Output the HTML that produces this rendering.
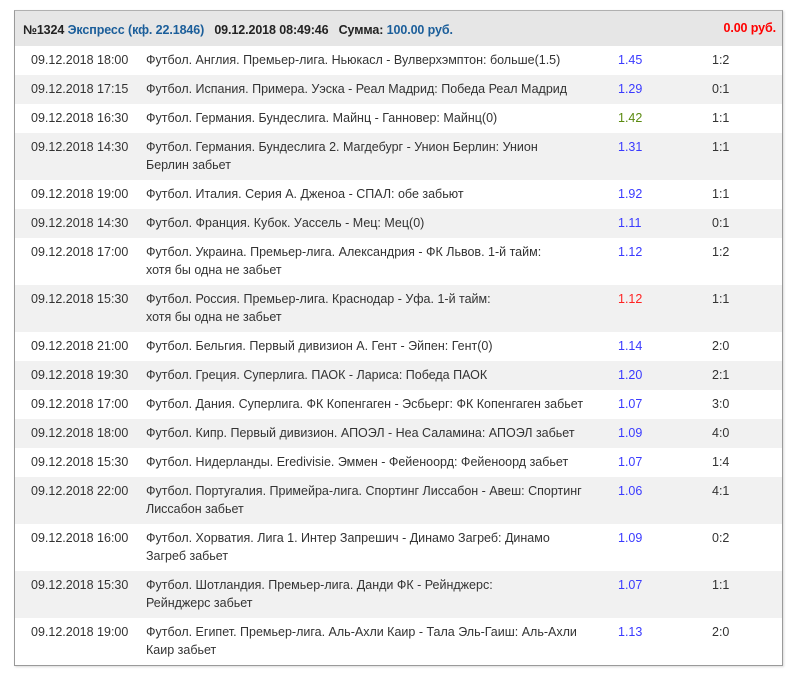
<!DOCTYPE html>
<html><head><meta charset="utf-8"><style>
body{margin:0;background:#fff;font-family:"Liberation Sans",sans-serif;}
.box{position:absolute;left:14px;top:10px;width:767px;border:1px solid #9a9a9a;border-top-color:#b0b0b0;box-shadow:1px 1px 2px rgba(0,0,0,.15);}
.hd{height:35px;background:#e6e6e6;position:relative;font-weight:bold;font-size:12.5px;color:#222;letter-spacing:-0.1px;}
.hd .l{position:absolute;left:8px;top:12px;white-space:nowrap;}
.hd .r{position:absolute;right:6px;top:10px;color:#f00;}
.bl{color:#1b5e9a;}
table{border-collapse:collapse;width:767px;table-layout:fixed;font-size:12.5px;color:#333;letter-spacing:0;}
td{padding:5px 0 6px 16px;line-height:18px;vertical-align:top;}
tr:nth-child(even){background:#f1f1f1;}
.c3{padding-left:18px;color:#3a3aff;}
.c4{padding-left:18px;}
</style></head><body>
<div class="box">
<div class="hd"><div class="l">№1324 <span class="bl">Экспресс (кф. 22.1846)</span> &nbsp; 09.12.2018 08:49:46 &nbsp; Сумма: <span class="bl">100.00 руб.</span></div><div class="r">0.00 руб.</div></div>
<table>
<colgroup><col style="width:115px"><col style="width:470px"><col style="width:94px"><col></colgroup>
<tr><td>09.12.2018 18:00</td><td>Футбол. Англия. Премьер-лига. Ньюкасл - Вулверхэмптон: больше(1.5)</td><td class="c3">1.45</td><td class="c4">1:2</td></tr>
<tr><td>09.12.2018 17:15</td><td>Футбол. Испания. Примера. Уэска - Реал Мадрид: Победа Реал Мадрид</td><td class="c3">1.29</td><td class="c4">0:1</td></tr>
<tr><td>09.12.2018 16:30</td><td>Футбол. Германия. Бундеслига. Майнц - Ганновер: Майнц(0)</td><td class="c3" style="color:#5a8a10">1.42</td><td class="c4">1:1</td></tr>
<tr><td>09.12.2018 14:30</td><td>Футбол. Германия. Бундеслига 2. Магдебург - Унион Берлин: Унион<br>Берлин забьет</td><td class="c3">1.31</td><td class="c4">1:1</td></tr>
<tr><td>09.12.2018 19:00</td><td>Футбол. Италия. Серия А. Дженоа - СПАЛ: обе забьют</td><td class="c3">1.92</td><td class="c4">1:1</td></tr>
<tr><td>09.12.2018 14:30</td><td>Футбол. Франция. Кубок. Уассель - Мец: Мец(0)</td><td class="c3">1.11</td><td class="c4">0:1</td></tr>
<tr><td>09.12.2018 17:00</td><td>Футбол. Украина. Премьер-лига. Александрия - ФК Львов. 1-й тайм:<br>хотя бы одна не забьет</td><td class="c3">1.12</td><td class="c4">1:2</td></tr>
<tr><td>09.12.2018 15:30</td><td>Футбол. Россия. Премьер-лига. Краснодар - Уфа. 1-й тайм:<br>хотя бы одна не забьет</td><td class="c3" style="color:#f22">1.12</td><td class="c4">1:1</td></tr>
<tr><td>09.12.2018 21:00</td><td>Футбол. Бельгия. Первый дивизион А. Гент - Эйпен: Гент(0)</td><td class="c3">1.14</td><td class="c4">2:0</td></tr>
<tr><td>09.12.2018 19:30</td><td>Футбол. Греция. Суперлига. ПАОК - Лариса: Победа ПАОК</td><td class="c3">1.20</td><td class="c4">2:1</td></tr>
<tr><td>09.12.2018 17:00</td><td>Футбол. Дания. Суперлига. ФК Копенгаген - Эсбьерг: ФК Копенгаген забьет</td><td class="c3">1.07</td><td class="c4">3:0</td></tr>
<tr><td>09.12.2018 18:00</td><td>Футбол. Кипр. Первый дивизион. АПОЭЛ - Неа Саламина: АПОЭЛ забьет</td><td class="c3">1.09</td><td class="c4">4:0</td></tr>
<tr><td>09.12.2018 15:30</td><td>Футбол. Нидерланды. Eredivisie. Эммен - Фейеноорд: Фейеноорд забьет</td><td class="c3">1.07</td><td class="c4">1:4</td></tr>
<tr><td>09.12.2018 22:00</td><td>Футбол. Португалия. Примейра-лига. Спортинг Лиссабон - Авеш: Спортинг<br>Лиссабон забьет</td><td class="c3">1.06</td><td class="c4">4:1</td></tr>
<tr><td>09.12.2018 16:00</td><td>Футбол. Хорватия. Лига 1. Интер Запрешич - Динамо Загреб: Динамо<br>Загреб забьет</td><td class="c3">1.09</td><td class="c4">0:2</td></tr>
<tr><td>09.12.2018 15:30</td><td>Футбол. Шотландия. Премьер-лига. Данди ФК - Рейнджерс:<br>Рейнджерс забьет</td><td class="c3">1.07</td><td class="c4">1:1</td></tr>
<tr><td>09.12.2018 19:00</td><td>Футбол. Египет. Премьер-лига. Аль-Ахли Каир - Тала Эль-Гаиш: Аль-Ахли<br>Каир забьет</td><td class="c3">1.13</td><td class="c4">2:0</td></tr>
</table>
</div>
</body></html>
